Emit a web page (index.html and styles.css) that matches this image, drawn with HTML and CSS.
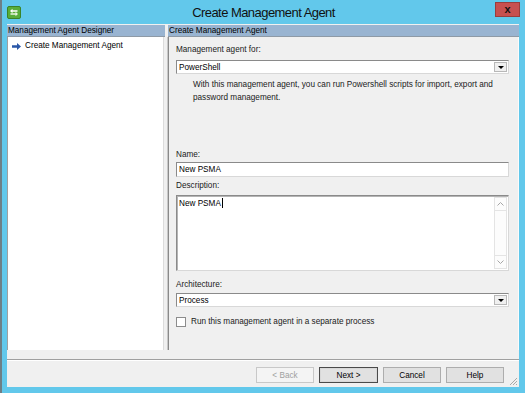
FILE: index.html
```html
<!DOCTYPE html>
<html lang="en">
<head>
    <meta charset="UTF-8">
    <meta name="viewport" content="width=device-width, initial-scale=1.0">
    <title>Create Management Agent</title>
    <link rel="stylesheet" href="styles.css">
</head>
<body>
    <div class="window">
        <header class="titlebar">
            <svg class="app-icon" width="14" height="13" viewBox="0 0 14 13">
                <rect x="0.5" y="0.5" width="13" height="12" rx="1.5" fill="#58ad3a" stroke="#3b8427"/>
                <path d="M3 5 L5.5 2.8 V4.2 H10.5 V5.8 H5.5 V7.2 Z" fill="#fff"/>
                <path d="M11 8 L8.5 5.8 V7.2 H3.5 V8.8 H8.5 V10.2 Z" fill="#e8f5e0"/>
            </svg>
            <div class="title">Create Management Agent</div>
            <button class="close">x</button>
        </header>
        <div class="client">
            <div class="main">
                <section class="designer">
                    <div class="pane-head">Management Agent Designer</div>
                    <div class="tree">
                        <div class="tree-item">
                            <svg width="9" height="7" viewBox="0 0 9 7">
                                <path d="M0 2.3 H5 V0 L9 3.5 L5 7 V4.7 H0 Z" fill="#2a57a8"/>
                            </svg>
                            <span>Create Management Agent</span>
                        </div>
                    </div>
                </section>
                <div class="splitter"></div>
                <section class="agent">
                    <div class="pane-head">Create Management Agent</div>
                    <div class="agent-body">
                        <div class="label">Management agent for:</div>
                        <div class="select">
                            <span>PowerShell</span>
                            <span class="drop"><i></i></span>
                        </div>
                        <p class="help">With this management agent, you can run Powershell scripts for import, export and password management.</p>

                        <div class="label name-label">Name:</div>
                        <div class="textbox">New PSMA</div>
                        <div class="label gap-3">Description:</div>
                        <div class="textarea">
                            <div class="textarea-text">New PSMA<span class="caret"></span></div>
                            <div class="vscroll">
                                <span class="arrow">
                                    <svg width="7" height="4" viewBox="0 0 7 4"><path d="M0.5 3.5 L3.5 0.5 L6.5 3.5" fill="none" stroke="#a6a6a6"/></svg>
                                </span>
                                <span class="track"></span>
                                <span class="arrow">
                                    <svg width="7" height="4" viewBox="0 0 7 4"><path d="M0.5 0.5 L3.5 3.5 L6.5 0.5" fill="none" stroke="#a6a6a6"/></svg>
                                </span>
                            </div>
                        </div>
                        <div class="label arch-label">Architecture:</div>
                        <div class="select arch-select">
                            <span>Process</span>
                            <span class="drop"><i></i></span>
                        </div>
                        <label class="check">
                            <span class="box"></span>
                            Run this management agent in a separate process
                        </label>
                    </div>
                </section>
            </div>
            <footer class="footer">
                <button class="btn" disabled>&lt; Back</button>
                <button class="btn default">Next &gt;</button>
                <button class="btn">Cancel</button>
                <button class="btn">Help</button>
            </footer>
            <svg class="grip" width="9" height="9" viewBox="0 0 9 9">
                <path d="M8 1 L1 8 M8 4 L4 8 M8 7 L7 8" stroke="#a9a9a9" stroke-width="1"/>
            </svg>
        </div>
    </div>
</body>
</html>
```

FILE: styles.css
```css
* {
    box-sizing: border-box;
}

body {
    margin: 0;
    background-color: #62c8eb;
    font-family: "Liberation Sans", Arial, sans-serif;
    font-size: 8.2px;
    color: #000;
}

.window {
    width: 525px;
    height: 393px;
    background-color: #62c8eb;
    border-left: 2px solid #6e7f86;
    display: flex;
    flex-direction: column;
}

.titlebar {
    height: 24px;
    display: grid;
    grid-template-columns: 1fr auto 1fr;
    align-items: center;
}

.app-icon {
    margin-left: 5px;
    margin-top: 1px;
}

.title {
    font-size: 13px;
    letter-spacing: -0.55px;
    color: #111;
}

.close {
    justify-self: end;
    align-self: start;
    margin-top: 2px;
    margin-right: 5px;
    width: 25px;
    height: 15px;
    padding: 0;
    background-color: #c75050;
    border: 1px solid #9a3d3d;
    color: #111;
    font-family: "Liberation Sans", Arial, sans-serif;
    font-weight: bold;
    font-size: 11px;
    line-height: 11px;
}

.client {
    flex: 1;
    margin: 0 6px 6px 5px;
    background-color: #f0f0f0;
    display: flex;
    flex-direction: column;
    position: relative;
}

.main {
    height: 326px;
    display: flex;
}

.pane-head {
    height: 12px;
    margin-top: 1px;
    padding-left: 1px;
    line-height: 11px;
    background-color: #99b4d1;
    border-bottom: 1px solid #8e9aa6;
    white-space: nowrap;
    overflow: hidden;
}

.designer {
    width: 158px;
    display: flex;
    flex-direction: column;
}

.tree {
    flex: 1;
    margin-right: 1px;
    background-color: #fff;
    border-left: 1px solid #a0a0a0;
    border-right: 1px solid #dcdcdc;
    padding: 3px 0 0 4px;
}

.tree-item {
    display: flex;
    align-items: center;
    gap: 4px;
    line-height: 12px;
}

.splitter {
    width: 2px;
}

.agent {
    flex: 1;
    display: flex;
    flex-direction: column;
}

.agent .pane-head {
    margin-left: 1px;
}

.agent-body {
    flex: 1;
    border-left: 1px solid #c8c8c8;
    box-shadow: inset 1px 0 0 #8a8a8a;
    border-right: 1px solid #fbfbfb;
    padding: 7px 9px 0 8px;
}

.label {
    line-height: 12px;
    color: #1a1a1a;
}

.select {
    margin-top: 4px;
    height: 14px;
    display: flex;
    align-items: center;
    justify-content: space-between;
    background-color: #fff;
    border: 1px solid;
    border-color: #8a8a8a #d8d8d8 #d8d8d8 #8a8a8a;
    padding-left: 2px;
}

.drop {
    width: 13px;
    height: 10px;
    margin-right: 1px;
    background-color: #f0f0f0;
    border: 1px solid #b8b8b8;
    display: flex;
    align-items: center;
    justify-content: center;
}

.drop i {
    width: 0;
    height: 0;
    border-left: 3px solid transparent;
    border-right: 3px solid transparent;
    border-top: 3px solid #000;
}

.help {
    margin: 4px 0 0;
    padding-left: 17px;
    line-height: 13px;
    color: #1a1a1a;
}

.name-label {
    margin-top: 45px;
}

.textbox {
    margin-top: 1px;
    height: 15px;
    line-height: 13px;
    padding-left: 2px;
    background-color: #fff;
    border: 1px solid;
    border-color: #8a8a8a #d8d8d8 #d8d8d8 #8a8a8a;
}

.gap-3 {
    margin-top: 3px;
}

.textarea {
    margin-top: 3px;
    height: 76px;
    display: flex;
    background-color: #fff;
    border: 1px solid;
    border-color: #8a8a8a #d8d8d8 #d8d8d8 #8a8a8a;
    box-shadow: inset 1px 1px 0 #b4b4b4;
}

.textarea-text {
    flex: 1;
    padding: 2px 0 0 2px;
    line-height: 11px;
}

.caret {
    display: inline-block;
    width: 1px;
    height: 10px;
    margin-left: 1px;
    vertical-align: -2px;
    background-color: #000;
}

.vscroll {
    width: 13px;
    display: flex;
    flex-direction: column;
    margin: 1px 1px 1px 0;
    border: 1px solid #e4e4e4;
    background-color: #fcfcfc;
}

.arrow {
    height: 13px;
    display: flex;
    align-items: center;
    justify-content: center;
    border-bottom: 1px solid #e4e4e4;
}

.arrow:last-child {
    border-bottom: none;
    border-top: 1px solid #e4e4e4;
}

.track {
    flex: 1;
}

.arch-label {
    margin-top: 8px;
}

.arch-select {
    margin-top: 2px;
}

.check {
    margin-top: 9px;
    display: flex;
    align-items: center;
    gap: 5px;
    line-height: 12px;
    color: #1a1a1a;
}

.box {
    width: 10px;
    height: 10px;
    background-color: #fff;
    border: 1px solid #8c8c8c;
}

.footer {
    margin-top: 9px;
    border-top: 1px solid #a0a0a0;
    box-shadow: inset 0 1px 0 #fff;
    padding: 7px 15px 0 0;
    display: flex;
    justify-content: flex-end;
    gap: 5px;
}

.btn {
    width: 58px;
    height: 16px;
    padding: 0;
    background-color: #e1e1e1;
    border: 1px solid #adadad;
    font-family: "Liberation Sans", Arial, sans-serif;
    font-size: 8.2px;
    color: #000;
}

.btn:disabled {
    color: #a0a0a0;
    background-color: #f4f4f4;
    border-color: #c8c8c8;
}

.btn.default {
    width: 59px;
    border-color: #4a4a4a;
    box-shadow: inset 0 0 0 1px #d8d8d8;
}

.grip {
    position: absolute;
    right: 1px;
    bottom: 1px;
}
```
